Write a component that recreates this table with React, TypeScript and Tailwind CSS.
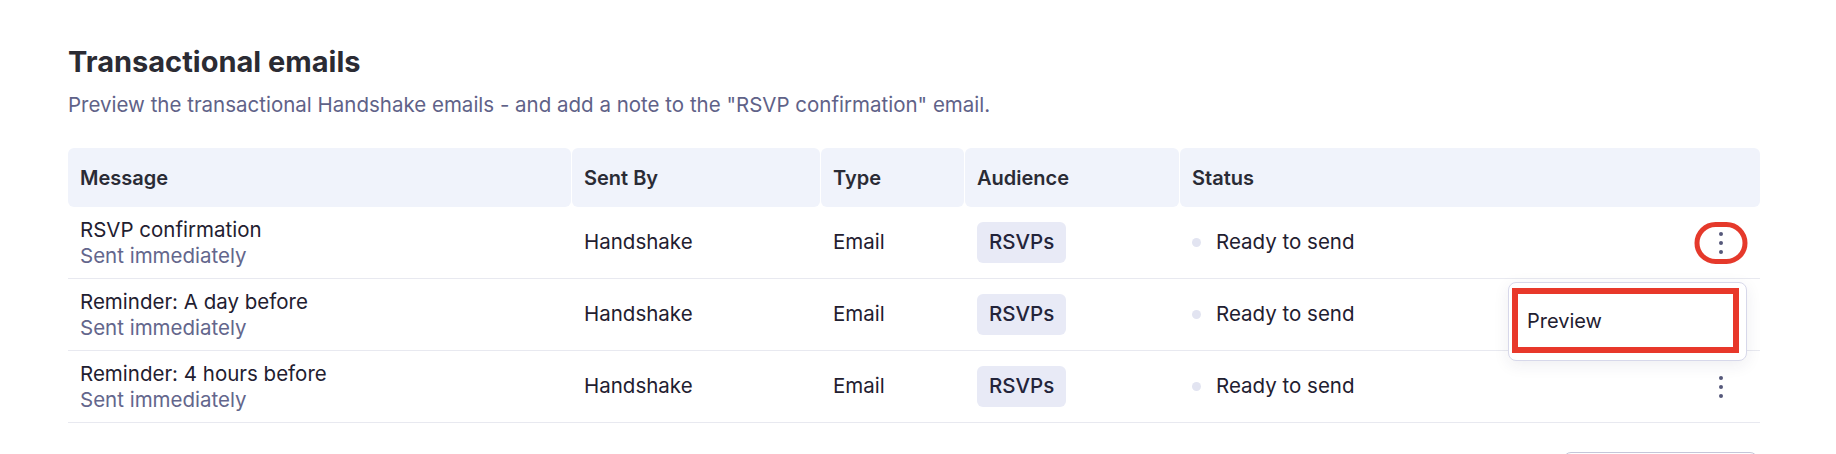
import React from 'react';

interface EmailRow {
  name: string;
  timing: string;
  sentBy: string;
  type: string;
  audience: string;
  status: string;
}

const rows: EmailRow[] = [
  { name: 'RSVP confirmation', timing: 'Sent immediately', sentBy: 'Handshake', type: 'Email', audience: 'RSVPs', status: 'Ready to send' },
  { name: 'Reminder: A day before', timing: 'Sent immediately', sentBy: 'Handshake', type: 'Email', audience: 'RSVPs', status: 'Ready to send' },
  { name: 'Reminder: 4 hours before', timing: 'Sent immediately', sentBy: 'Handshake', type: 'Email', audience: 'RSVPs', status: 'Ready to send' },
];

const cols = 'grid grid-cols-[503px_248px_143px_214px_1fr] gap-x-px';

const Kebab: React.FC = () => (
  <button className="w-[40px] h-[40px] flex flex-col items-center justify-center gap-[5px]" aria-label="More actions">
    <span className="w-[4px] h-[4px] rounded-full bg-[#55587a]" />
    <span className="w-[4px] h-[4px] rounded-full bg-[#55587a]" />
    <span className="w-[4px] h-[4px] rounded-full bg-[#55587a]" />
  </button>
);

const HeaderCell: React.FC<{ label: string }> = ({ label }) => (
  <div className="h-[59px] bg-[#f0f3fb] rounded-[6px] px-3 flex items-center text-[20px] font-semibold text-[#2a2b35]">
    {label}
  </div>
);

export default function App() {
  return (
    <div className="min-h-screen bg-white pl-[68px] pr-[76px] pt-[44px] font-['Inter',sans-serif] overflow-hidden">
      <h2 className="text-[29px] leading-[36px] font-bold text-[#2b2b33]">Transactional emails</h2>
      <p className="mt-[10px] text-[20.5px] leading-[30px] text-[#5f6288]">
        Preview the transactional Handshake emails - and add a note to the "RSVP confirmation" email.
      </p>

      <div className="relative mt-[28px]">
        <div className={cols}>
          <HeaderCell label="Message" />
          <HeaderCell label="Sent By" />
          <HeaderCell label="Type" />
          <HeaderCell label="Audience" />
          <HeaderCell label="Status" />
        </div>

        {rows.map((row, i) => (
          <div key={i} className={`${cols} h-[72px] border-b border-[#e8e9f0] items-center text-[20.5px] text-[#1f2030]`}>
            <div className="px-3 flex flex-col leading-[26px]">
              <span>{row.name}</span>
              <span className="text-[#63668c]">{row.timing}</span>
            </div>
            <div className="px-3">{row.sentBy}</div>
            <div className="px-3">{row.type}</div>
            <div className="px-3">
              <span className="inline-flex items-center h-[41px] px-3 rounded-[6px] bg-[#e8eaf6] font-medium text-[#23243a]">
                {row.audience}
              </span>
            </div>
            <div className="pl-3 pr-[19px] flex items-center justify-between">
              <div className="flex items-center gap-[15px]">
                <span className="w-[9px] h-[9px] rounded-full bg-[#e2e4f1]" />
                <span>{row.status}</span>
              </div>
              <div className="relative">
                {i !== 1 && <Kebab />}
                {i === 0 && (
                  <span className="absolute left-1/2 top-1/2 -translate-x-1/2 -translate-y-1/2 w-[53px] h-[42px] rounded-full border-[5px] border-[#e5392b] pointer-events-none" />
                )}
              </div>
            </div>
          </div>
        ))}

        {/* open actions menu for row 2 */}
        <div className="absolute top-[134px] right-[13px] w-[239px] h-[79px] bg-white border border-[#d7d8ea] rounded-[8px] shadow-[0_4px_16px_rgba(40,40,80,0.08)] pt-[5px] pl-[3px] pr-[7px] pb-[7px]">
          <div className="h-full border-[6px] border-[#e8382a] flex items-center pl-[9px] text-[20px] text-[#1f2030]">
            Preview
          </div>
        </div>

        <div className="flex justify-end mt-[29px] pr-[2px]">
          <div className="w-[195px] h-[44px] rounded-[8px] border border-[#c5c6d9] bg-white" />
        </div>
      </div>
    </div>
  );
}
